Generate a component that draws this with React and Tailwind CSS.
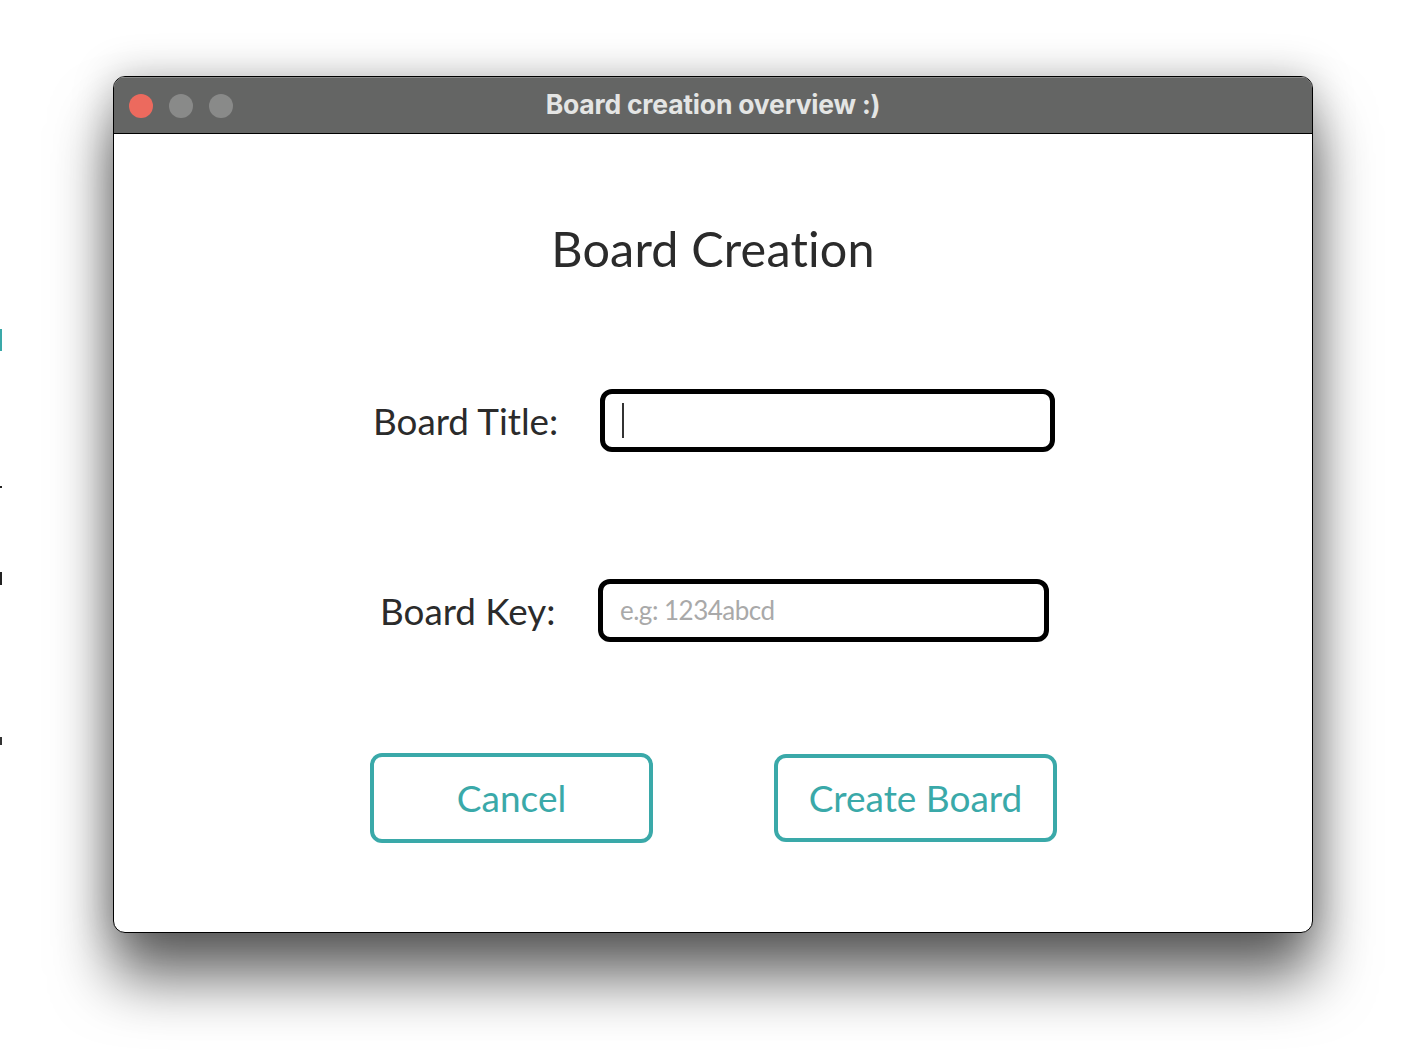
import React from "react";

export default function App() {
  return (
    <div className="relative w-[1425px] h-[1063px] bg-white overflow-hidden" style={{ fontFamily: "Lato, 'Noto Sans', sans-serif" }}>
      {/* background app fragments at left edge */}
      <div className="absolute left-0 top-[329px] w-[2px] h-[22px] bg-[#3aa9a9]" />
      <div className="absolute left-0 top-[486px] w-[2px] h-[2px] bg-[#222]" />
      <div className="absolute left-0 top-[572px] w-[2px] h-[13px] bg-[#222]" />
      <div className="absolute left-0 top-[737px] w-[2px] h-[8px] bg-[#333]" />

      <div className="pl-[113px] pt-[76px]">
        <div className="w-[1200px] h-[857px] rounded-[12px] border border-black bg-white overflow-hidden flex flex-col shadow-[0_45px_60px_rgba(0,0,0,0.6),0_0_40px_rgba(0,0,0,0.25)]">
          {/* title bar */}
          <div className="relative h-[57px] bg-[#646564] border-b border-black flex items-center shrink-0 border-t border-t-[#8a8b8a]">
            <div className="flex items-center gap-[16px] pl-[15px]">
              <div className="w-[24px] h-[24px] rounded-full bg-[#ec6a5e]" />
              <div className="w-[24px] h-[24px] rounded-full bg-[#898a89]" />
              <div className="w-[24px] h-[24px] rounded-full bg-[#898a89]" />
            </div>
            <div className="absolute inset-0 flex items-center justify-center text-[#e4e5e4] font-bold text-[26.5px] tracking-[-0.2px] pb-[1px]" style={{ fontFamily: "Inter, sans-serif" }}>
              <span>Board creation overview :)</span>
            </div>
          </div>

          {/* content */}
          <div className="flex-1 flex flex-col items-center text-[#2b2b2b]">
            <h1 className="mt-[82px] text-[48.5px] leading-[64px] font-normal tracking-[0.2px]">Board Creation</h1>

            <div className="mt-[109px] flex items-center w-full pl-[259px]">
              <span className="text-[36.8px] leading-[40px] w-[227px]">Board Title:</span>
              <div className="w-[455px] h-[63px] rounded-[12px] border-[5px] border-black flex items-center pl-[17px]">
                <div className="w-[2px] h-[35px] bg-[#333]" />
              </div>
            </div>

            <div className="mt-[127px] flex items-center w-full pl-[266px]">
              <span className="text-[36.8px] leading-[40px] w-[218px]">Board Key:</span>
              <div className="w-[451px] h-[63px] rounded-[12px] border-[5px] border-black flex items-center pl-[17px]">
                <span className="text-[26px] text-[#a9a9a9] tracking-[-0.5px]">e.g: 1234abcd</span>
              </div>
            </div>

            <div className="mt-[111px] flex items-center w-full pl-[256px]">
              <button className="w-[283px] h-[90px] rounded-[12px] border-[4px] border-[#3aa9a9] text-[#3aa9a9] text-[37px] flex items-center justify-center">
                Cancel
              </button>
              <button className="ml-[121px] w-[283px] h-[88px] rounded-[12px] border-[4px] border-[#3aa9a9] text-[#3aa9a9] text-[37px] flex items-center justify-center">
                Create Board
              </button>
            </div>
          </div>
        </div>
      </div>
    </div>
  );
}
